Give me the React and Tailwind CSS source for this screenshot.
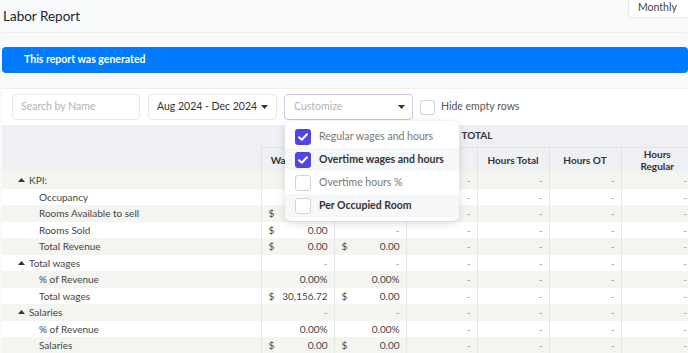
import { useState } from 'react'

const rows = [
  { label: 'KPI:', group: true, c1: null, c2: null },
  { label: 'Occupancy', c1: null, c2: null },
  { label: 'Rooms Available to sell', c1: ['$', ''], c2: null },
  { label: 'Rooms Sold', c1: ['$', '0.00'], c2: ['', '-'] },
  { label: 'Total Revenue', c1: ['$', '0.00'], c2: ['$', '0.00'] },
  { label: 'Total wages', group: true, c1: ['', '-'], c2: ['', '-'] },
  { label: '% of Revenue', c1: ['', '0.00%'], c2: ['', '0.00%'] },
  { label: 'Total wages', c1: ['$', '30,156.72'], c2: ['$', '0.00'] },
  { label: 'Salaries', group: true, c1: ['', '-'], c2: ['', '-'] },
  { label: '% of Revenue', c1: ['', '0.00%'], c2: ['', '0.00%'] },
  { label: 'Salaries', c1: ['$', '0.00'], c2: ['$', '0.00'] },
]

const options = [
  { label: 'Regular wages and hours', checked: true, strong: false },
  { label: 'Overtime wages and hours', checked: true, strong: true },
  { label: 'Overtime hours %', checked: false, strong: false },
  { label: 'Per Occupied Room', checked: false, strong: true },
]

function Caret({ up = false, className = '' }) {
  return (
    <svg width="7" height="4" viewBox="0 0 7 4" className={className}>
      {up ? <path d="M0 4 L3.5 0 L7 4 Z" fill="currentColor" /> : <path d="M0 0 L3.5 4 L7 0 Z" fill="currentColor" />}
    </svg>
  )
}

function Box({ checked }) {
  if (checked) {
    return (
      <span className="w-4 h-4 rounded-[3px] bg-[#4f46e5] flex items-center justify-center shrink-0">
        <svg width="10" height="8" viewBox="0 0 10 8">
          <path d="M1 4.2 L3.8 6.8 L9 1.2" stroke="white" strokeWidth="2" fill="none" strokeLinecap="round" strokeLinejoin="round" />
        </svg>
      </span>
    )
  }
  return <span className="w-4 h-4 rounded-[3px] border border-[#cfd3d8] bg-white shrink-0" />
}

function Money({ v }) {
  if (!v) return null
  return (
    <div className="flex justify-between pl-[7px] pr-[6px]">
      <span>{v[0]}</span>
      <span className={v[1] === '-' ? 'text-[#9a9a9a]' : ''}>{v[1]}</span>
    </div>
  )
}

export default function App() {
  const [open] = useState(true)
  return (
    <div className="w-[688px] h-[353px] overflow-hidden bg-[#f8f9fa] text-[#333] font-['Lato',sans-serif]">
      <div className="relative h-[33px] mx-[2px] border-b border-[#eceef1]">
        <div className="pl-[1px] pt-[7px] text-[13.5px] leading-[18px] text-[#1f2328]">Labor Report</div>
        <div className="absolute left-[626px] top-0 h-[18px] w-[70px] bg-white border border-t-0 border-[#e6e8eb] rounded-bl-[4px] pl-[9px] text-[10.5px] leading-[15px] text-[#444]">
          Monthly
        </div>
      </div>

      <div className="mt-[14px] ml-[2px] h-[26px] rounded-[4px] bg-[#007bff] flex items-center pl-[22px] text-[10.5px] font-bold text-white">
        This report was generated
      </div>

      <div className="mt-[15px] ml-[2px] bg-white border-t border-[#eef0f2]">
        <div className="flex items-center gap-[8px] pl-[10px] pt-[5px] pb-[5px] text-[10.5px]">
          <div className="w-[128px] h-[26px] rounded-[4px] border border-[#e6e8eb] flex items-center pl-[8px] text-[#b0b4b9]">
            Search by Name
          </div>
          <div className="w-[129px] h-[26px] rounded-[4px] border border-[#e6e8eb] flex items-center justify-between pl-[8px] pr-[8px] text-[#333]">
            <span>Aug 2024 - Dec 2024</span>
            <Caret className="text-[#333]" />
          </div>
          <div className="relative -ml-[1px]">
            <div className="w-[129px] h-[26px] rounded-[4px] border border-[#c9c5f3] flex items-center justify-between pl-[9px] pr-[7px] text-[#b0b4b9]">
              <span>Customize</span>
              <Caret className="text-[#333]" />
            </div>
            {open && (
              <div className="absolute left-[1px] top-[27px] z-10 w-[174px] rounded-[6px] bg-white shadow-[0_2px_8px_rgba(0,0,0,0.15)] py-[4px]">
                {options.map((o, i) => (
                  <div
                    key={o.label}
                    className={`h-[23px] flex items-center gap-[8px] pl-[10px] text-[10.5px] ${i % 2 === 1 ? 'bg-[#f6f7f9]' : ''} ${o.strong ? 'font-bold text-[#333]' : 'text-[#777]'}`}
                  >
                    <Box checked={o.checked} />
                    <span>{o.label}</span>
                  </div>
                ))}
              </div>
            )}
          </div>
          <div className="flex items-center gap-[6px] ml-[-1px] text-[#555]">
            <span className="w-[15px] h-[15px] rounded-[3px] border border-[#cfd3d8]" />
            <span>Hide empty rows</span>
          </div>
        </div>

        <table className="table-fixed border-collapse w-[691px] text-[10px]">
          <colgroup>
            <col className="w-[259px]" />
            <col className="w-[73px]" />
            <col className="w-[72px]" />
            <col className="w-[71px]" />
            <col className="w-[72px]" />
            <col className="w-[72px]" />
            <col className="w-[72px]" />
          </colgroup>
          <thead className="bg-[#eef0f3] text-[#333]">
            <tr className="h-[22px]">
              <th />
              <th colSpan={6} className="border-b border-[#dfe2e6] text-center font-bold">TOTAL</th>
            </tr>
            <tr className="h-[25px] leading-[12px]">
              <th className="border-r border-[#dfe2e6]" />
              <th className="border-r border-[#dfe2e6] font-bold">Wages Total</th>
              <th className="border-r border-[#dfe2e6]" />
              <th className="border-r border-[#dfe2e6]" />
              <th className="border-r border-[#dfe2e6] font-bold">Hours Total</th>
              <th className="border-r border-[#dfe2e6] font-bold">Hours OT</th>
              <th className="font-bold">Hours<br />Regular</th>
            </tr>
          </thead>
          <tbody className="text-[#444]">
            {rows.map((r, i) => (
              <tr key={i} className={`h-[16.5px] leading-[16px] ${i % 2 === 0 ? 'bg-[#f4f5f0]' : 'bg-white'}`}>
                <td className="border-r border-[#e4e6e9] p-0">
                  {r.group ? (
                    <div className="flex items-center pl-[16px]">
                      <Caret up className="text-[#333] mr-[4px]" />
                      <span>{r.label}</span>
                    </div>
                  ) : (
                    <div className="pl-[37px]">{r.label}</div>
                  )}
                </td>
                <td className="border-r border-[#e4e6e9] p-0"><Money v={r.c1} /></td>
                <td className="border-r border-[#e4e6e9] p-0"><Money v={r.c2} /></td>
                <td className="border-r border-[#e4e6e9] p-0 pr-[6px] text-right text-[#9a9a9a]">-</td>
                <td className="border-r border-[#e4e6e9] p-0 pr-[6px] text-right text-[#9a9a9a]">-</td>
                <td className="border-r border-[#e4e6e9] p-0 pr-[6px] text-right text-[#9a9a9a]">-</td>
                <td className="p-0 pr-[6px] text-right text-[#9a9a9a]">-</td>
              </tr>
            ))}
          </tbody>
        </table>
      </div>
    </div>
  )
}
